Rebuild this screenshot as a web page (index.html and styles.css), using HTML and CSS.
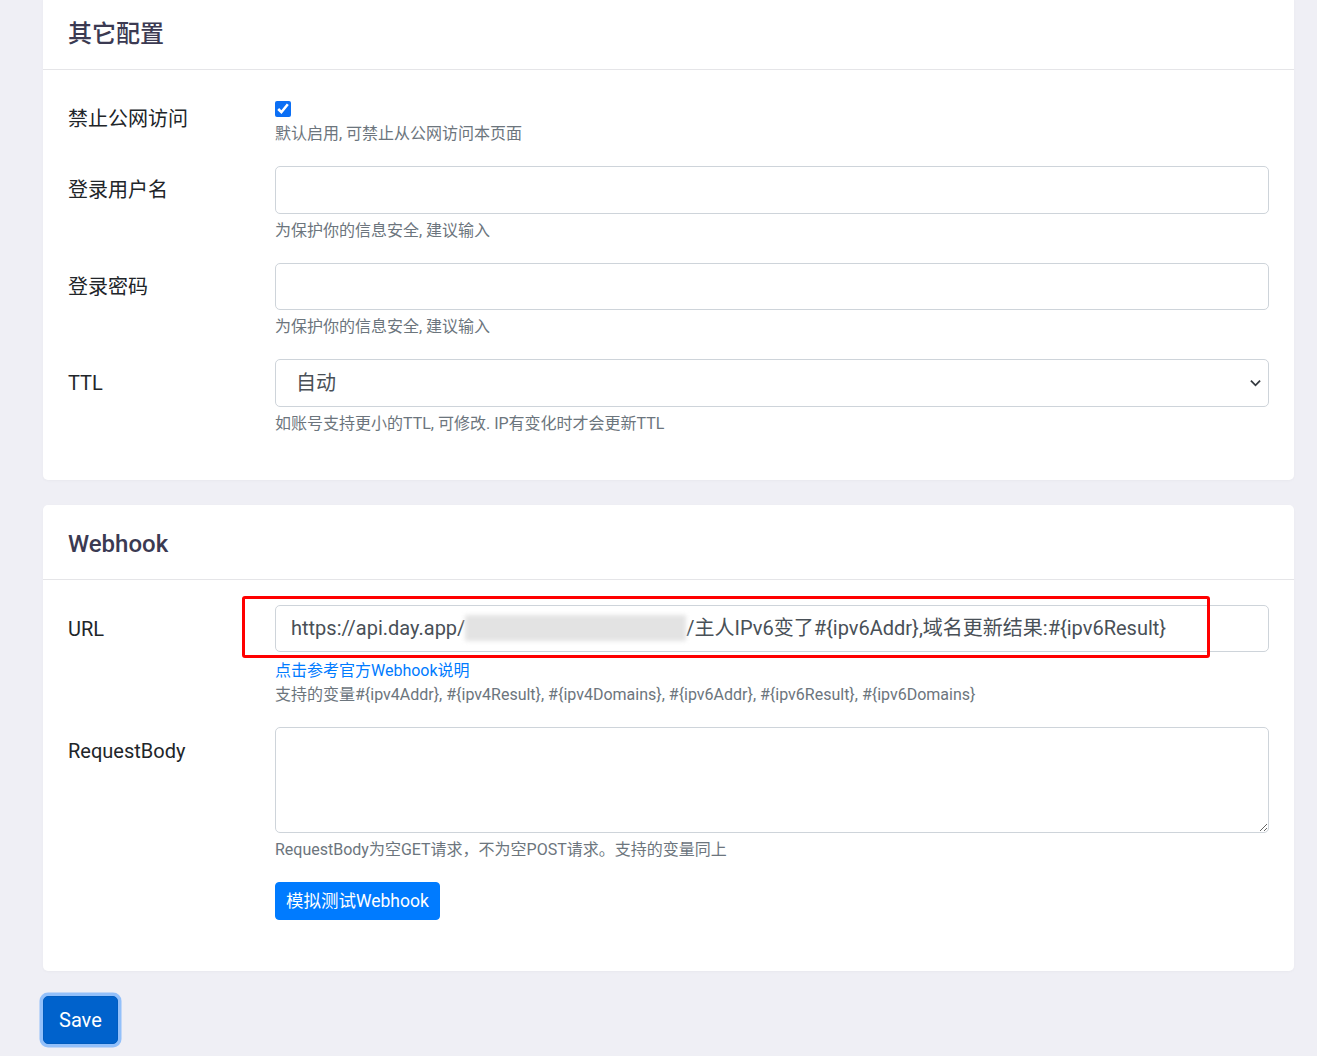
FILE: index.html
```html
<!DOCTYPE html>
<html lang="zh-CN">
<head>
<meta charset="utf-8">
<title>配置</title>
<link rel="stylesheet" href="styles.css">
</head>
<body>
<div class="page">
  <section class="card card-first">
    <div class="card-header"><h5 class="card-title">其它配置</h5></div>
    <div class="card-body card-body-first">
      <div class="form-group">
        <label class="col-label">禁止公网访问</label>
        <div class="field">
          <input type="checkbox" class="check" checked>
          <small class="help">默认启用, 可禁止从公网访问本页面</small>
        </div>
      </div>
      <div class="form-group">
        <label class="col-label">登录用户名</label>
        <div class="field">
          <input type="text" class="form-control">
          <small class="help">为保护你的信息安全, 建议输入</small>
        </div>
      </div>
      <div class="form-group">
        <label class="col-label">登录密码</label>
        <div class="field">
          <input type="password" class="form-control">
          <small class="help">为保护你的信息安全, 建议输入</small>
        </div>
      </div>
      <div class="form-group">
        <label class="col-label">TTL</label>
        <div class="field">
          <select class="form-control select"><option>自动</option></select>
          <small class="help">如账号支持更小的TTL, 可修改. IP有变化时才会更新TTL</small>
        </div>
      </div>
    </div>
  </section>

  <section class="card">
    <div class="card-header"><h5 class="card-title">Webhook</h5></div>
    <div class="card-body">
      <div class="form-group">
        <label class="col-label">URL</label>
        <div class="field field-url">
          <div class="form-control url-value">https://api.day.app/<span class="redacted"></span>/主人IPv6变了#{ipv6Addr},域名更新结果:#{ipv6Result}</div>
          <div class="highlight"></div>
          <small class="help help-link"><a class="link" href="#">点击参考官方Webhook说明</a></small>
          <small class="help help-tight">支持的变量#{ipv4Addr}, #{ipv4Result}, #{ipv4Domains}, #{ipv6Addr}, #{ipv6Result}, #{ipv6Domains}</small>
        </div>
      </div>
      <div class="form-group">
        <label class="col-label">RequestBody</label>
        <div class="field">
          <textarea class="form-control textarea" rows="3"></textarea>
          <small class="help">RequestBody为空GET请求，不为空POST请求。支持的变量同上</small>
        </div>
      </div>
      <div class="form-group form-group-last">
        <div class="col-label"></div>
        <div class="field">
          <button class="btn-test" type="button">模拟测试Webhook</button>
        </div>
      </div>
    </div>
  </section>

  <div class="actions">
    <button class="btn-save" type="button">Save</button>
  </div>
</div>
</body>
</html>
```

FILE: styles.css
```css
html, body {
  margin: 0;
  padding: 0;
  background: #efeff5;
}

body {
  font-family: "Segoe UI", Roboto, "Noto Sans CJK SC", sans-serif;
  font-size: 20px;
  line-height: 1.5;
  color: #212529;
}

.page {
  padding-left: 43px;
  width: 1251px;
  margin-top: -5px;
}

.card {
  background: #fff;
  border-radius: 5px;
  box-shadow: 0 1px 3px rgba(0, 0, 0, 0.03);
  margin-bottom: 25px;
}

.card-header {
  padding: 24px 25px 20px;
  border-bottom: 1px solid #e5e5e8;
}

.card-title {
  margin: 0;
  font-size: 24px;
  line-height: 30px;
  font-weight: 500;
  color: #3b3a52;
}

.card-body {
  padding: 25px;
}

.card-body-first {
  padding-bottom: 24px;
}

.form-group {
  display: grid;
  grid-template-columns: 207px 1fr;
  margin-bottom: 20px;
}

.form-group-last {
  margin-bottom: 26px;
}

.col-label {
  padding-top: 9px;
  line-height: 30px;
  font-size: 20px;
  color: #212529;
}

.field {
  display: flex;
  flex-direction: column;
  align-items: flex-start;
  min-width: 0;
}

.field-url {
  position: relative;
}

.check {
  width: 16px;
  height: 16px;
  margin: 6px 0 0 0;
  accent-color: #0b6ff5;
}

.help {
  display: block;
  margin-top: 5px;
  font-size: 16px;
  line-height: 24px;
  color: #6c757d;
}

.help-link {
  margin-top: 7px;
}

.help-tight {
  margin-top: 0;
}

.link {
  color: #007bff;
  text-decoration: none;
}

.form-control {
  box-sizing: border-box;
  width: 100%;
  height: 47.5px;
  padding: 7px 15px;
  font: inherit;
  font-size: 20px;
  line-height: 30px;
  color: #495057;
  background: #fff;
  border: 1px solid #ced4da;
  border-radius: 5px;
  outline: none;
}

.select {
  appearance: none;
  -webkit-appearance: none;
  padding-left: 20px;
  background-image: url("data:image/svg+xml,%3csvg xmlns='http://www.w3.org/2000/svg' width='12' height='8' viewBox='0 0 12 8'%3e%3cpath fill='none' stroke='%23343a40' stroke-width='2' d='M1 1.5l5 5 5-5'/%3e%3c/svg%3e");
  background-repeat: no-repeat;
  background-position: right 7px center;
  background-size: 11px 8px;
}

.url-value {
  white-space: nowrap;
  overflow: hidden;
}

.redacted {
  display: inline-block;
  width: 221px;
  height: 26px;
  vertical-align: -6px;
  background: #e3e3e3;
  filter: blur(2px);
}

.highlight {
  position: absolute;
  left: -33px;
  top: -9px;
  width: 968px;
  height: 62px;
  box-sizing: border-box;
  border: 3px solid #ff0000;
  border-radius: 3px;
  pointer-events: none;
}

.textarea {
  height: 106px;
  resize: vertical;
}

.btn-test {
  font: inherit;
  font-size: 17.5px;
  line-height: 26px;
  padding: 5px 10px;
  color: #fff;
  background: #007bff;
  border: 1px solid #007bff;
  border-radius: 4px;
  cursor: pointer;
}

.actions {
  padding-bottom: 10px;
}

.btn-save {
  font: inherit;
  font-size: 20px;
  line-height: 30px;
  padding: 8px 15px;
  color: #fff;
  background: #0062cc;
  border: 1px solid #005cbf;
  border-radius: 5px;
  box-shadow: 0 0 0 3.5px #93c0fa;
  cursor: pointer;
}
```
